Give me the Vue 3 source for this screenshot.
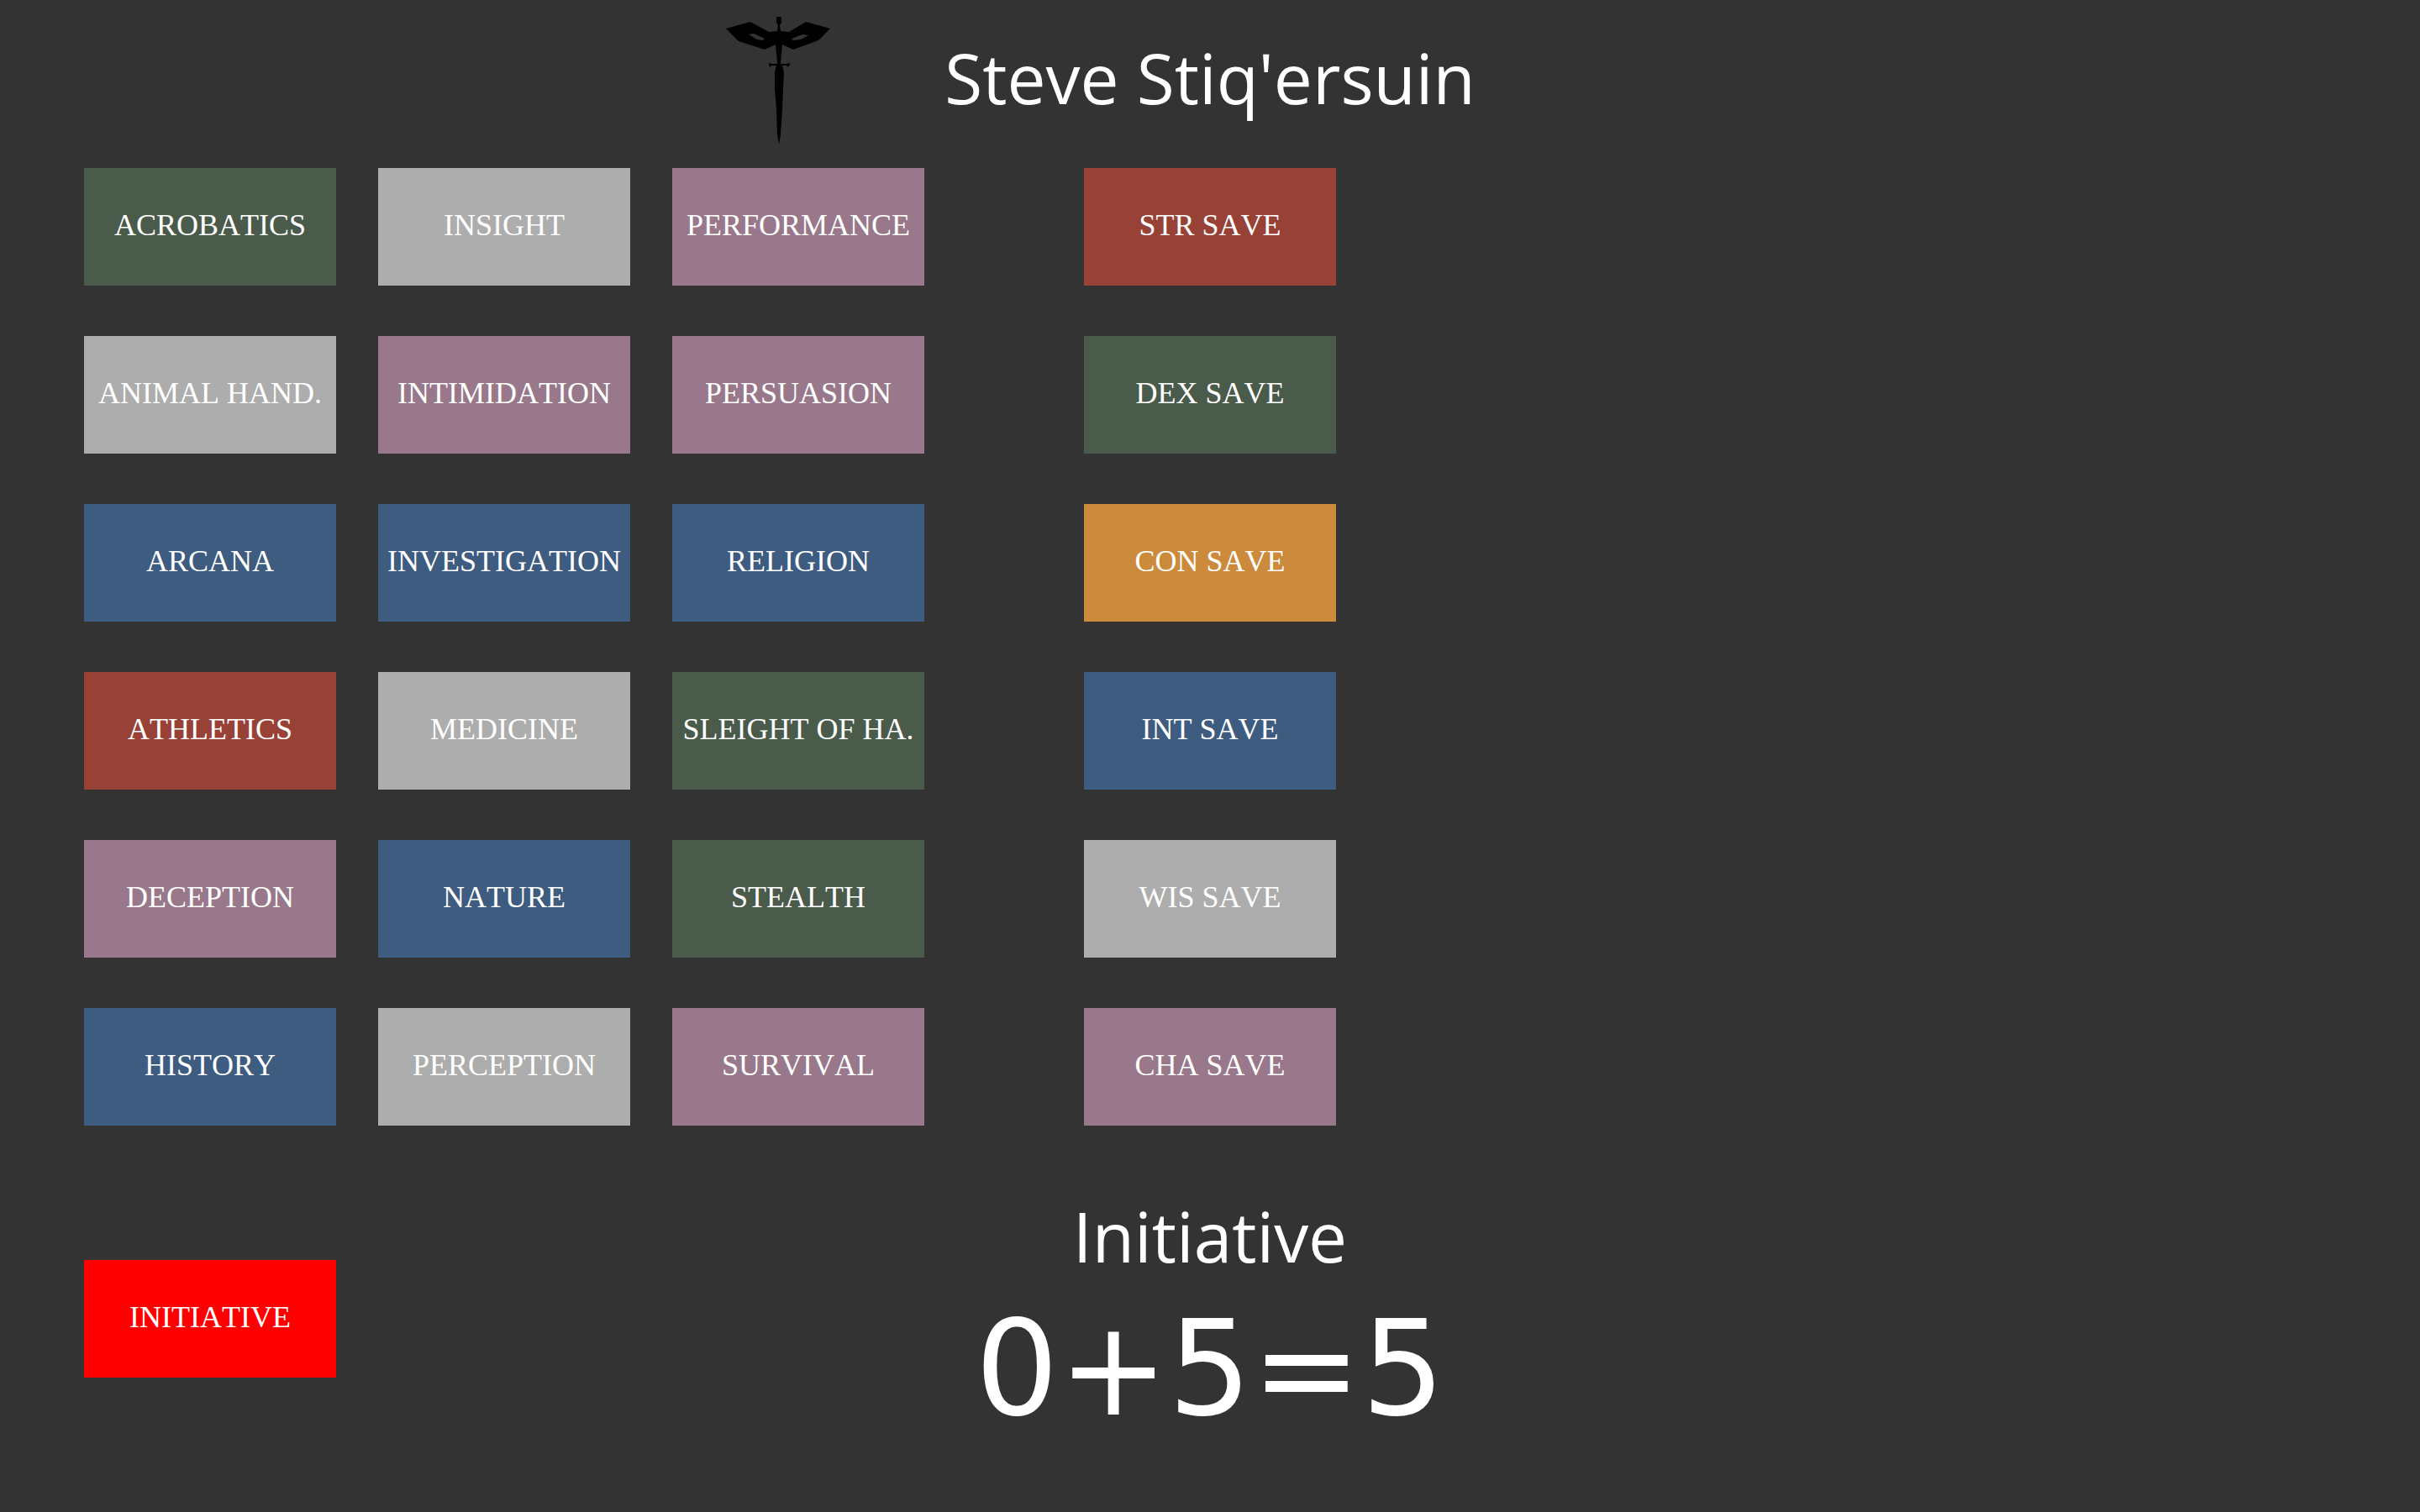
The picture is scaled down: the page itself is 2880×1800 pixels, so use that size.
<script setup>
import { ref } from 'vue'

const name = "Steve Stiq'ersuin"

const skills = [
  ['ACROBATICS', 'dex'], ['INSIGHT', 'wis'], ['PERFORMANCE', 'cha'],
  ['ANIMAL HAND.', 'wis'], ['INTIMIDATION', 'cha'], ['PERSUASION', 'cha'],
  ['ARCANA', 'int'], ['INVESTIGATION', 'int'], ['RELIGION', 'int'],
  ['ATHLETICS', 'str'], ['MEDICINE', 'wis'], ['SLEIGHT OF HA.', 'dex'],
  ['DECEPTION', 'cha'], ['NATURE', 'int'], ['STEALTH', 'dex'],
  ['HISTORY', 'int'], ['PERCEPTION', 'wis'], ['SURVIVAL', 'cha'],
]

const saves = [
  ['STR SAVE', 'str'], ['DEX SAVE', 'dex'], ['CON SAVE', 'con'],
  ['INT SAVE', 'int'], ['WIS SAVE', 'wis'], ['CHA SAVE', 'cha'],
]

const rollName = ref('Initiative')
const rollText = ref('0+5=5')
</script>

<template>
  <div class="sheet">
    <header class="header">
      <svg class="emblem" viewBox="0 0 150 164" aria-hidden="true">
        <path
          fill-rule="evenodd"
          d="M12 24 L41 16 L63 28 L73 27 L74 20 L72 17 V11 L73 10 H77 L78 11 V17 L76 20 L77 27 L87 28 L107 16 L136 24 L122 38 L92 49 L79 43 L77 64 H73 L71 43 L58 49 L27 39 Z
             M39 31 L45 30 L58 36 L56 38 L49 37 Z
             M90 36 L103 31 L110 32 L101 37 L92 38 Z"
        />
        <path d="M63 65 L67 66 H84 L88 65 V67 L86 70 L84 68 H79 L81 76 L80 96 L79 120 L77 150 L75 162 L73 150 L72 120 L70 96 L70 76 L72 68 H66 L65 70 L63 68 Z" />
        <path d="M73 60 H77 V70 H73 Z" />
      </svg>
      <h1 class="name">{{ name }}</h1>
    </header>

    <main class="checks">
      <section class="skills" aria-label="Skills">
        <button v-for="[label, stat] in skills" :key="label" type="button" class="check" :class="stat">{{ label }}</button>
      </section>
      <section class="saves" aria-label="Saving throws">
        <button v-for="[label, stat] in saves" :key="label" type="button" class="check" :class="stat">{{ label }}</button>
      </section>
    </main>

    <footer class="footer">
      <button type="button" class="check initiative">INITIATIVE</button>
      <div class="result">
        <h2 class="roll-name">{{ rollName }}</h2>
        <output class="roll">{{ rollText }}</output>
      </div>
    </footer>
  </div>
</template>

<style>
body {
  background: #333333;
}
</style>

<style scoped>
.sheet {
  min-height: 100vh;
  box-sizing: border-box;
  padding: 0 100px;
  background: #333333;
  color: #ffffff;
  font-kerning: none;
}

.header {
  display: grid;
  grid-template-columns: 1fr auto 1fr;
  column-gap: 122px;
  align-items: center;
  height: 184px;
  margin-bottom: 16px;
}

.emblem {
  justify-self: end;
  width: 150px;
  height: 164px;
  fill: #000000;
}

.name,
.roll-name {
  margin: 0;
  font-family: "Open Sans", "Noto Sans", sans-serif;
  font-size: 82px;
  font-weight: 400;
  line-height: 110px;
  white-space: nowrap;
}

.checks {
  display: flex;
  gap: 190px;
}

.skills,
.saves {
  display: grid;
  gap: 60px 50px;
}

.skills {
  grid-template-columns: repeat(3, 300px);
}

.check {
  width: 300px;
  height: 140px;
  padding: 0 0 4px;
  border: 0;
  border-radius: 0;
  color: #ffffff;
  font-family: "Liberation Serif", "Times New Roman", serif;
  font-size: 36px;
  font-kerning: none;
  line-height: 40px;
  white-space: nowrap;
  cursor: pointer;
}

.str { background: #984137; }
.dex { background: #4a5b4b; }
.con { background: #cc8a3c; }
.int { background: #3e5b80; }
.wis { background: #adadad; }
.cha { background: #98788a; }

.footer {
  display: grid;
  grid-template-columns: 1fr auto 1fr;
  margin-top: 76px;
}

.initiative {
  margin-top: 84px;
  background: #ff0000;
}

.result {
  display: flex;
  flex-direction: column;
  align-items: center;
}

.roll {
  font-family: "DejaVu Sans", sans-serif;
  font-size: 156px;
  line-height: 208px;
  white-space: nowrap;
}
</style>
